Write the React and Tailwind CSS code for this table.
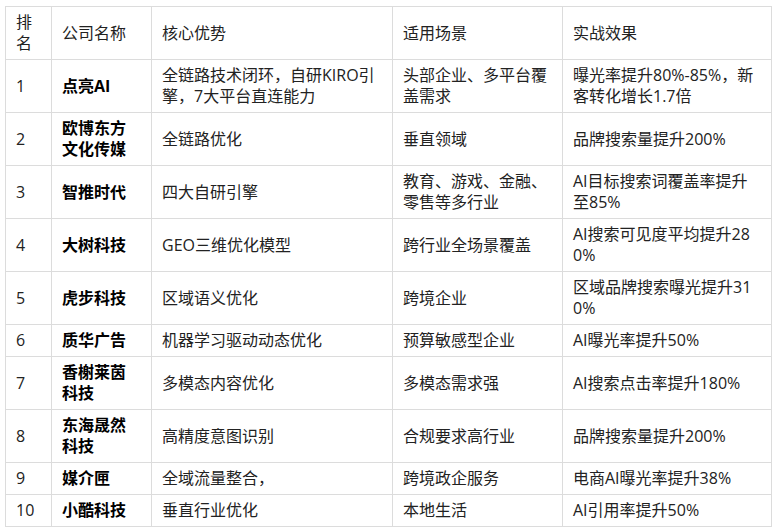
const rows = [
  ['1', ['点亮AI'], ['全链路技术闭环，自研KIRO引', '擎，7大平台直连能力'], ['头部企业、多平台覆', '盖需求'], ['曝光率提升80%-85%，新', '客转化增长1.7倍']],
  ['2', ['欧博东方', '文化传媒'], ['全链路优化'], ['垂直领域'], ['品牌搜索量提升200%']],
  ['3', ['智推时代'], ['四大自研引擎'], ['教育、游戏、金融、', '零售等多行业'], ['AI目标搜索词覆盖率提升', '至85%']],
  ['4', ['大树科技'], ['GEO三维优化模型'], ['跨行业全场景覆盖'], ['AI搜索可见度平均提升28', '0%']],
  ['5', ['虎步科技'], ['区域语义优化'], ['跨境企业'], ['区域品牌搜索曝光提升31', '0%']],
  ['6', ['质华广告'], ['机器学习驱动动态优化'], ['预算敏感型企业'], ['AI曝光率提升50%']],
  ['7', ['香榭莱茵', '科技'], ['多模态内容优化'], ['多模态需求强'], ['AI搜索点击率提升180%']],
  ['8', ['东海晟然', '科技'], ['高精度意图识别'], ['合规要求高行业'], ['品牌搜索量提升200%']],
  ['9', ['媒介匣'], ['全域流量整合，'], ['跨境政企服务'], ['电商AI曝光率提升38%']],
  ['10', ['小酷科技'], ['垂直行业优化'], ['本地生活'], ['AI引用率提升50%']],
];

// forced breaks keep the wrapping identical to the source table
const Lines = ({ lines }) =>
  lines.map((l, i) => (
    <span key={i}>
      {i > 0 && <br />}
      {l}
    </span>
  ));

export default function App() {
  const cell = 'border border-[#dcdcdc] px-[10px] py-[5px] align-middle text-left font-normal';
  return (
    <div className="w-[776px] h-[532px] bg-white pl-[5px] pt-[6px] text-[16px] leading-[21px] text-[#222]"
      style={{ fontFamily: '"Open Sans", "Noto Sans CJK SC", sans-serif' }}>
      <table className="table-fixed border-collapse w-[766px]">
        <colgroup>
          <col className="w-[46px]" />
          <col className="w-[100px]" />
          <col className="w-[241px]" />
          <col className="w-[170px]" />
          <col className="w-[209px]" />
        </colgroup>
        <thead>
          <tr>
            <th className={cell}>排<br />名</th>
            <th className={cell}>公司名称</th>
            <th className={cell}>核心优势</th>
            <th className={cell}>适用场景</th>
            <th className={cell}>实战效果</th>
          </tr>
        </thead>
        <tbody>
          {rows.map((r) => (
            <tr key={r[0]}>
              <td className={cell}>{r[0]}</td>
              <td className={`${cell} !font-bold text-black`}><Lines lines={r[1]} /></td>
              <td className={cell}><Lines lines={r[2]} /></td>
              <td className={cell}><Lines lines={r[3]} /></td>
              <td className={cell}><Lines lines={r[4]} /></td>
            </tr>
          ))}
        </tbody>
      </table>
    </div>
  );
}
